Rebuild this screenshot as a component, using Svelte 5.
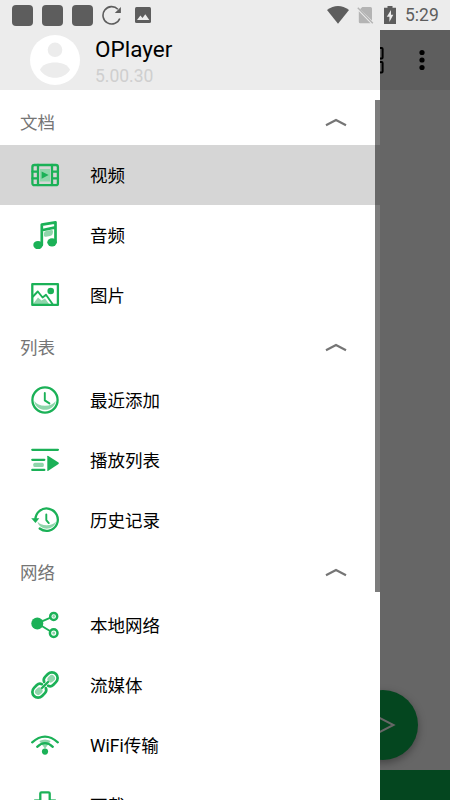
<script>
  const sections = [
    {
      title: '文档',
      items: [
        { icon: 'video', label: '视频', active: true },
        { icon: 'music', label: '音频' },
        { icon: 'image', label: '图片' },
      ],
    },
    {
      title: '列表',
      items: [
        { icon: 'clock', label: '最近添加' },
        { icon: 'playlist', label: '播放列表' },
        { icon: 'history', label: '历史记录' },
      ],
    },
    {
      title: '网络',
      items: [
        { icon: 'share', label: '本地网络' },
        { icon: 'link', label: '流媒体' },
        { icon: 'wifi', label: 'WiFi传输' },
        { icon: 'download', label: '下载' },
      ],
    },
  ];
</script>

{#snippet glyph(name)}
  <svg class="icon" viewBox="0 0 30 30" width="30" height="30">
    {#if name === 'video'}
      <rect class="soft" x="10" y="9" width="10" height="12.5" />
      <rect class="line" x="2.4" y="5" width="25.5" height="20.2" rx="2" />
      <path class="line" d="M8 5v20M22 5v20M2.5 11.6H8M2.5 18.4H8M22 11.6h6M22 18.4h6" />
      <path class="fill" d="M11.6 11.4l7 3.7-7 3.7z" />
    {:else if name === 'music'}
      <path class="soft" d="M14 13.2q0-2 2-2.3l5-.8q2-.3 2 1.4 0 4-3 4.5l-4 .7q-2 .3-2-1z" />
      <path class="line heavy" d="M11.8 25V4.6L25.5 2.3v20M11.8 10.2L25.5 7.4" />
      <ellipse class="fill" cx="8" cy="25" rx="4.7" ry="4.1" />
      <ellipse class="fill" cx="22" cy="22.3" rx="4.7" ry="4.1" />
    {:else if name === 'image'}
      <path class="soft" d="M3 24l5-6.500 3.500 3 3.500-2 4.500 6H3z" />
      <rect class="line" x="2.3" y="4.1" width="25.6" height="20.8" />
      <path class="line thin" d="M3 16.5L7.8 11.5 12.6 17.5 16 14.8 22.5 24" />
      <circle class="fill" cx="20.7" cy="11" r="3.3" />
    {:else if name === 'clock'}
      <path class="soft" d="M4.3 16q3.2 4.7 10.7 4.7T25.7 16C24.5 27.7 5.5 27.7 4.3 16z" />
      <circle class="line" cx="15" cy="15" r="12.6" />
      <path class="line thin" d="M14.8 8v7.4l4.6 3" />
    {:else if name === 'playlist'}
      <rect class="soft" x="3.3" y="17.8" width="10.5" height="4.2" rx="1.5" />
      <path class="line" d="M2.3 4.8h25.6M2.3 14.8h12M2.3 24.9h12" />
      <path class="fill" d="M17.3 11.3q0-1 1-.4l10.2 6.7q.8.7 0 1.4l-10.2 6.8q-1 .6-1-.4z" />
    {:else if name === 'history'}
      <path class="soft" d="M7.5 16.5q3 3.8 9.2 3.8t9.2-3.8C24.5 26 9 26 7.5 16.5z" />
      <path class="line" d="M5.4 14.6A11.2 11.2 0 1 1 9.7 23.5" />
      <path class="fill" d="M1.2 13.2H9.3L5.5 18z" />
      <path class="line thin" d="M16.3 9.4v5.7l2.5 3" />
    {:else if name === 'share'}
      <path class="line thin" d="M7.3 13.3L20 7.8M7.3 13.3L20 21" />
      <circle class="fill" cx="7.3" cy="13.4" r="6" />
      <circle class="line node" cx="23.7" cy="6.4" r="3.5" />
      <circle class="line node" cx="23.7" cy="23.1" r="3.8" />
      <circle class="soft" cx="23.7" cy="6.4" r="1.3" />
      <circle class="soft" cx="23.7" cy="23.1" r="1.5" />
    {:else if name === 'link'}
      <g transform="rotate(-45 15 15)">
        <rect class="soft" x="19.8" y="11.8" width="8" height="6.4" rx="3.2" />
        <rect class="soft" x="2.2" y="11.8" width="8" height="6.400" rx="3.2" />
        <path class="line heavy" d="M16.6 12.2Q17.8 9.3 20.8 9.3h4a5.7 5.7 0 0 1 0 11.400H20.800q-3 0-4.200-2.900M13.400 12.200Q12.200 9.300 9.200 9.300H5.200a5.700 5.700 0 0 0 0 11.400H9.200q3 0 4.200-2.900" />
        <path class="line" d="M10.700 15h8.600" />
      </g>
    {:else if name === 'wifi'}
      <path class="soft" d="M9.3 11q5.7-3 11.4 0L15 18.8z" />
      <path class="line" d="M2.2 12.3q12.8-11.4 25.6 0" />
      <path class="line" d="M7.2 16.8q7.8-7.4 15.6 0" />
      <circle class="fill" cx="15" cy="21.6" r="3.1" />
    {:else}
      <path class="soft" d="M4 9h7v2H4zM19 9h7v2h-7z" />
      <path class="line" d="M10.300 11V3.600q0-1.200 1.200-1.200h7q1.200 0 1.200 1.200V11h5L15 20 5.500 11z" />
    {/if}
  </svg>
{/snippet}

<div class="screen">
  <header class="status">
    <i class="block"></i><i class="block"></i><i class="block"></i>
    <svg class="reload" width="20" height="20" viewBox="0 0 20 20">
      <path d="M15.900 4.200A8.700 8.700 0 1 0 17.800 13.500" fill="none" stroke="#5d5d5d" stroke-width="1.6" />
      <path d="M18.900 2v6.100h-6.100z" fill="#5d5d5d" />
    </svg>
    <svg class="photo" width="16" height="16" viewBox="0 0 16 16">
      <rect width="16" height="16" rx="1.5" fill="#5d5d5d" />
      <path d="M2 13l3.400-4.400 2.100 2.300L10.300 7.300l4 5.700z" fill="#ececec" />
    </svg>
    <span class="grow"></span>
    <svg class="signal" width="22" height="18" viewBox="0 0 22 18">
      <path d="M0 4Q11-4 22 4L11 17.700z" fill="#5d5d5d" />
    </svg>
    <svg class="sim" width="17" height="18" viewBox="0 0 17 18">
      <path d="M5.300 1h8.200q1.500 0 1.500 1.500v12L3 3.200zM1.800 5.200l11.700 12H3.300q-1.500 0-1.500-1.500z" fill="#b4b4b4" />
      <path d="M.8 1.700L15.800 17.300" stroke="#b4b4b4" stroke-width="1.400" />
    </svg>
    <svg class="battery" width="12" height="18" viewBox="0 0 12 18">
      <path d="M3.500 0h5v1.800H12V18H0V1.800h3.500z" fill="#5d5d5d" />
      <path d="M7 4L2.800 10.700h2.600V16L9.300 8.800H7z" fill="#ececec" />
    </svg>
    <span class="time">5:29</span>
  </header>

  <div class="body">
    <aside class="drawer">
      <div class="profile">
        <svg class="avatar" width="50" height="50" viewBox="0 0 50 50">
          <circle cx="25" cy="25" r="25" fill="#fff" />
          <circle cx="25" cy="14.800" r="7.300" fill="#ececec" />
          <path d="M10 34.800C13.500 25 36.500 25 40 34.800C33.500 45.500 16.500 45.500 10 34.800z" fill="#ececec" />
        </svg>
        <div class="who">
          <div class="name">OPlayer</div>
          <div class="version">5.00.30</div>
        </div>
      </div>
      <nav>
        {#each sections as section}
          <div class="heading">
            <span>{section.title}</span>
            <svg width="22" height="10" viewBox="0 0 22 10">
              <path d="M1 8.200L11 3l10 5.200" fill="none" stroke="#757575" stroke-width="2.2" />
            </svg>
          </div>
          {#each section.items as item}
            <div class="item" class:active={item.active}>
              {@render glyph(item.icon)}
              <span>{item.label}</span>
            </div>
          {/each}
        {/each}
      </nav>
      <div class="scrollbar"></div>
    </aside>

    <main class="behind">
      <div class="toolbar">
        <svg class="grid" width="4" height="28" viewBox="0 0 4 28">
          <path d="M0 2h1.600q1 0 1 1v8.500q0 1-1 1H0M0 16h1.600q1 0 1 1v8.500q0 1-1 1H0" fill="none" stroke="#000" stroke-width="2" />
        </svg>
        <svg class="more" width="6" height="22" viewBox="0 0 6 22">
          <circle cx="3" cy="3.500" r="2.600" /><circle cx="3" cy="11" r="2.600" /><circle cx="3" cy="18.500" r="2.600" />
        </svg>
      </div>
      <div class="content">
        <div class="fab">
          <svg width="30" height="30" viewBox="0 0 30 30">
            <path d="M3 4.500L23.500 15 3 25.500z" fill="none" stroke="#666" stroke-width="2" />
          </svg>
        </div>
      </div>
      <div class="bottom"></div>
    </main>
  </div>
</div>

<style>
  :global(body) {
    margin: 0;
    overflow: hidden;
  }
  .screen {
    width: 450px;
    height: 800px;
    overflow: hidden;
    display: flex;
    flex-direction: column;
    background: #fff;
    font-family: Roboto, 'Noto Sans CJK SC', sans-serif;
  }
  .status {
    flex: 0 0 30px;
    display: flex;
    align-items: center;
    box-sizing: border-box;
    padding: 0 10px 0 12px;
    background: #ececec;
  }
  .block {
    width: 21px;
    height: 21px;
    margin-right: 9px;
    border-radius: 4px;
    background: #5d5d5d;
  }
  .photo {
    margin-left: 13px;
  }
  .grow {
    flex: 1;
  }
  .sim {
    margin: 0 10px 0 8px;
  }
  .time {
    width: 35px;
    margin-left: 9px;
    color: #5d5d5d;
    font-size: 17.5px;
    font-weight: 450;
    line-height: 30px;
    white-space: nowrap;
  }
  .body {
    flex: 1;
    min-height: 0;
    display: flex;
  }
  .drawer {
    position: relative;
    width: 380px;
    overflow: hidden;
    background: #fff;
  }
  .profile {
    height: 60px;
    display: flex;
    box-sizing: border-box;
    padding: 5px 0 0 30px;
    background: #ececec;
  }
  .who {
    margin-left: 15px;
  }
  .name {
    font-size: 22.5px;
    line-height: 28px;
    color: #000;
  }
  .version {
    font-size: 17.5px;
    line-height: 26px;
    color: #cfcfcf;
  }
  nav {
    padding-top: 10px;
  }
  .heading {
    height: 45px;
    display: flex;
    align-items: center;
    justify-content: space-between;
    box-sizing: border-box;
    padding: 0 33px 2px 20px;
    font-size: 17.5px;
    color: #757575;
  }
  .item {
    height: 60px;
    display: flex;
    align-items: center;
    gap: 30px;
    box-sizing: border-box;
    padding-left: 30px;
    font-size: 17.5px;
    color: #000;
  }
  .item span {
    padding-bottom: 2px;
  }
  .active {
    background: #d6d6d6;
  }
  .line {
    fill: none;
    stroke: #1bb157;
    stroke-width: 2.3;
    stroke-linecap: round;
    stroke-linejoin: round;
  }
  .thin {
    stroke-width: 1.9;
  }
  .node {
    stroke-width: 2.5;
  }
  .heavy {
    stroke-width: 2.7;
  }
  .fill {
    fill: #1bb157;
  }
  .soft {
    fill: #8fd6ab;
  }
  .scrollbar {
    position: absolute;
    top: 70px;
    right: 0;
    width: 5px;
    height: 492px;
    background: rgba(0, 0, 0, 0.515);
  }
  .behind {
    width: 70px;
    display: flex;
    flex-direction: column;
    background: #666;
    overflow: hidden;
  }
  .toolbar {
    height: 60px;
    display: flex;
    align-items: center;
    justify-content: space-between;
    box-sizing: border-box;
    padding-right: 24.7px;
    background: #5e5e5e;
  }
  .content {
    flex: 1;
    display: flex;
    align-items: flex-end;
    padding-bottom: 10px;
  }
  .fab {
    flex: 0 0 70px;
    height: 70px;
    margin-left: -32.5px;
    display: flex;
    align-items: center;
    justify-content: center;
    border-radius: 50%;
    background: #04461f;
    box-shadow: 0 3px 8px rgba(0, 0, 0, 0.35);
  }
  .fab svg {
    margin-left: 4px;
  }
  .bottom {
    height: 30px;
    background: #04461f;
  }
</style>
